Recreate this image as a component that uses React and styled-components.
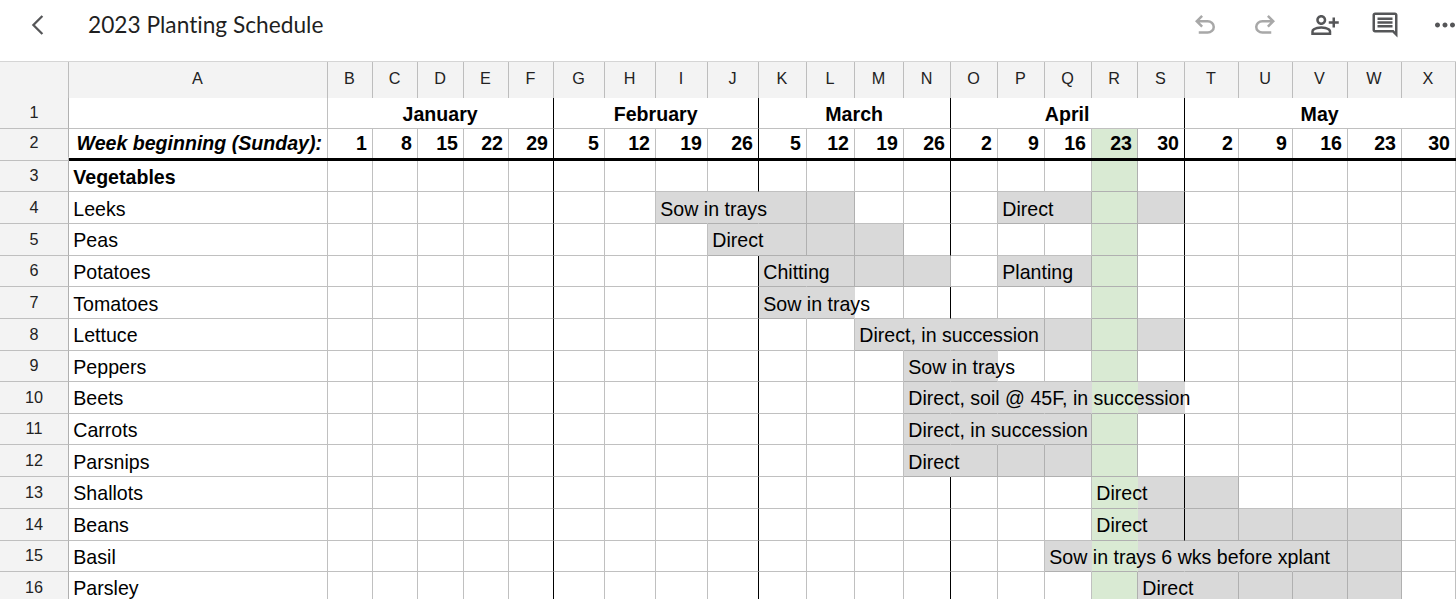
import React from "react";
import styled, { createGlobalStyle } from "styled-components";
import {
  MdMoreHoriz,
  MdOutlineComment,
  MdOutlinePersonAddAlt,
} from "react-icons/md";

const COLUMNS = "ABCDEFGHIJKLMNOPQRSTUVWX".split("");
const WIDTHS = [
  259, 45, 45, 46, 45, 45, 51, 51, 52, 51, 48, 48, 49, 47, 47, 47, 47, 46, 47,
  54, 54, 55, 54, 54,
];
const MONTH_ENDS = ["F", "J", "N", "S"];
const CURRENT_WEEK = "R";

const months = [
  { name: "January", span: 5 },
  { name: "February", span: 4 },
  { name: "March", span: 4 },
  { name: "April", span: 5 },
  { name: "May", span: 5 },
];

const weeks = [
  1, 8, 15, 22, 29, 5, 12, 19, 26, 5, 12, 19, 26, 2, 9, 16, 23, 30, 2, 9, 16,
  23, 30,
];

// fill: shaded columns, notes: [first column, last column the text covers, text]
const crops = [
  { name: "Vegetables", height: 31, bold: true },
  {
    name: "Leeks",
    height: 32,
    textTop: 5,
    fill: "IJKLPQS",
    notes: [
      ["I", "K", "Sow in trays"],
      ["P", "Q", "Direct"],
    ],
  },
  { name: "Peas", height: 32, fill: "JKLM", notes: [["J", "K", "Direct"]] },
  {
    name: "Potatoes",
    height: 31,
    fill: "KLMNPQ",
    plainEnd: "N",
    notes: [
      ["K", "L", "Chitting"],
      ["P", "Q", "Planting"],
    ],
  },
  {
    name: "Tomatoes",
    height: 32,
    textTop: 5,
    fill: "KL",
    notes: [["K", "M", "Sow in trays"]],
  },
  {
    name: "Lettuce",
    height: 32,
    fill: "MNOPQS",
    notes: [["M", "P", "Direct, in succession"]],
  },
  { name: "Peppers", height: 31, fill: "NO", notes: [["N", "P", "Sow in trays"]] },
  {
    name: "Beets",
    height: 32,
    fill: "NOPQS",
    notes: [["N", "T", "Direct, soil @ 45F, in succession"]],
  },
  {
    name: "Carrots",
    height: 31,
    fill: "NOPQ",
    notes: [["N", "Q", "Direct, in succession"]],
  },
  {
    name: "Parsnips",
    height: 32,
    textTop: 5,
    fill: "NOPQ",
    notes: [["N", "O", "Direct"]],
  },
  {
    name: "Shallots",
    height: 32,
    fill: "ST",
    notes: [["R", "S", "Direct"]],
  },
  { name: "Beans", height: 32, fill: "STUVW", notes: [["R", "S", "Direct"]] },
  {
    name: "Basil",
    height: 31,
    fill: "QSTUVW",
    notes: [["Q", "V", "Sow in trays 6 wks before xplant"]],
  },
  { name: "Parsley", height: 32, fill: "STUVW", notes: [["S", "T", "Direct"]] },
];

const GlobalStyle = createGlobalStyle`
  * {
    box-sizing: border-box;
  }
  body {
    margin: 0;
    background: #fff;
    overflow: hidden;
  }
`;

const Page = styled.div`
  width: 1456px;
  height: 599px;
  overflow: hidden;
  background: #fff;
  color: #000;
  font-family: "Liberation Sans", Arial, sans-serif;
`;

const Toolbar = styled.header`
  display: flex;
  align-items: center;
  height: 61px;
  padding: 0 0 11px 30px;
`;

const Title = styled.h1`
  flex: 1;
  margin: 0 0 0 42px;
  color: #1f1f1f;
  font-family: Lato, sans-serif;
  font-size: 22.7px;
  font-variant-ligatures: none;
  font-weight: 400;
  line-height: 30px;
  white-space: nowrap;
`;

const Actions = styled.div`
  display: flex;
  gap: 30px;
  margin-right: -4px;
`;

const IconButton = styled.button`
  display: flex;
  width: 30px;
  height: 30px;
  padding: 0;
  border: none;
  background: none;
  color: ${(props) => (props.$disabled ? "#a8a8a8" : "#555658")};

  svg {
    width: 30px;
    height: 30px;
  }
`;

const BackButton = styled(IconButton)`
  width: 16px;

  svg {
    width: 16px;
  }
`;

const Sheet = styled.main`
  border-top: 1px solid #d5d5d5;
`;

const Row = styled.div`
  display: grid;
  grid-template-columns: 69px ${WIDTHS.map((w) => `${w}px`).join(" ")};
  height: ${(props) => props.$height}px;
`;

const ColumnHead = styled.div`
  display: flex;
  align-items: center;
  justify-content: center;
  padding: 0 1px 4px 0;
  border-right: 1px solid #bdbdbd;
  background: #f3f3f3;
  color: #222;
  font-size: 16.2px;
`;

const RowHead = styled(ColumnHead)`
  padding: 0 0 1px;
  border-right-color: #b0b0b0;
  border-bottom: 1px solid ${(props) => (props.$open ? "#f3f3f3" : "#bfbfbf")};
`;

const lineColor = ({ $line, $fill }) => {
  if ($line === "month") return "#000";
  if ($line === "none") return $fill;
  return $fill === "#fff" ? "#c0c0c0" : "#b0b0b0";
};

const Cell = styled.div`
  display: flex;
  align-items: flex-start;
  justify-content: ${(props) => props.$align || "flex-start"};
  min-width: 0;
  padding: ${(props) => props.$top || 4}px 5px 0 4.3px;
  border-right: 1px solid ${lineColor};
  border-bottom: ${(props) =>
    props.$openBottom
      ? "none"
      : `1px solid ${props.$fill === "#fff" ? "#c0c0c0" : "#b0b0b0"}`};
  background: ${(props) => props.$fill};
  font-size: 19.58px;
  font-weight: ${(props) => (props.$bold ? 700 : 400)};
  font-style: ${(props) => (props.$italic ? "italic" : "normal")};
  line-height: 24px;
  white-space: nowrap;
`;

const MonthCell = styled(Cell)`
  grid-column: span ${(props) => props.$span};
`;

// Keeps spilled text above the fills of the cells it runs over.
const Note = styled.span`
  position: relative;
  z-index: 1;
`;

const FreezeLine = styled.div`
  grid-column: 2 / -1;
  background: #000;
`;

const fillOf = (column, fill = "") => {
  if (column === CURRENT_WEEK) return "#d9ead3";
  return fill.includes(column) ? "#d9d9d9" : "#fff";
};

const lineOf = (column, { notes = [], plainEnd }) => {
  if (notes.some(([from, to]) => column >= from && column < to)) return "none";
  if (column === plainEnd) return "grid";
  return MONTH_ENDS.includes(column) ? "month" : "grid";
};

const UndoIcon = ({ flip }) => (
  <svg viewBox="0 0 24 24" fill="currentColor">
    <path
      transform={flip ? "matrix(-1 0 0 1 24 0)" : undefined}
      d="M7 19v-2h7.1q1.575 0 2.738-1T18 13.5t-1.162-2.5T14.1 10H7.8l2.6 2.6L9 14 4 9l5-5 1.4 1.4L7.8 8h6.3q2.425 0 4.163 1.575T20 13.5t-1.737 3.925T14.1 19z"
    />
  </svg>
);

const BackIcon = () => (
  <svg viewBox="0 0 16 30" fill="none" stroke="currentColor" strokeWidth="2.3">
    <path d="M12.4 6 3.4 15l9 9" />
  </svg>
);

const CropRow = ({ crop, number }) => (
  <Row $height={crop.height}>
    <RowHead>{number}</RowHead>
    {COLUMNS.map((column) => {
      const note = (crop.notes || []).find(([from]) => from === column);
      return (
        <Cell
          key={column}
          $fill={fillOf(column, crop.fill)}
          $line={lineOf(column, crop)}
          $top={crop.textTop}
          $bold={crop.bold}
        >
          {column === "A" && crop.name}
          {note && <Note>{note[2]}</Note>}
        </Cell>
      );
    })}
  </Row>
);

const App = () => {
  return (
    <Page>
      <GlobalStyle />
      <Toolbar>
        <BackButton aria-label="Back">
          <BackIcon />
        </BackButton>
        <Title>2023 Planting Schedule</Title>
        <Actions>
          <IconButton $disabled aria-label="Undo">
            <UndoIcon />
          </IconButton>
          <IconButton $disabled aria-label="Redo">
            <UndoIcon flip />
          </IconButton>
          <IconButton aria-label="Share">
            <MdOutlinePersonAddAlt />
          </IconButton>
          <IconButton aria-label="Comments">
            <MdOutlineComment />
          </IconButton>
          <IconButton aria-label="More">
            <MdMoreHoriz />
          </IconButton>
        </Actions>
      </Toolbar>
      <Sheet>
        <Row $height={36}>
          <ColumnHead />
          {COLUMNS.map((column) => (
            <ColumnHead key={column}>{column}</ColumnHead>
          ))}
        </Row>
        <Row $height={31}>
          <RowHead>1</RowHead>
          <Cell $fill="#fff" />
          {months.map((month) => (
            <MonthCell
              key={month.name}
              $span={month.span}
              $fill="#fff"
              $line={month.name === "May" ? "grid" : "month"}
              $align="center"
              $bold
            >
              {month.name}
            </MonthCell>
          ))}
        </Row>
        <Row $height={29}>
          <RowHead $open>2</RowHead>
          <Cell $fill="#fff" $align="flex-end" $top={2} $openBottom $bold $italic>
            Week beginning (Sunday):
          </Cell>
          {weeks.map((day, i) => {
            const column = COLUMNS[i + 1];
            return (
              <Cell
                key={column}
                $fill={fillOf(column)}
                $line={MONTH_ENDS.includes(column) ? "month" : "grid"}
                $align="flex-end"
                $top={2}
                $openBottom
                $bold
              >
                {day}
              </Cell>
            );
          })}
        </Row>
        <Row $height={3}>
          <RowHead />
          <FreezeLine />
        </Row>
        {crops.map((crop, i) => (
          <CropRow key={crop.name} crop={crop} number={i + 3} />
        ))}
      </Sheet>
    </Page>
  );
};

export default App;
